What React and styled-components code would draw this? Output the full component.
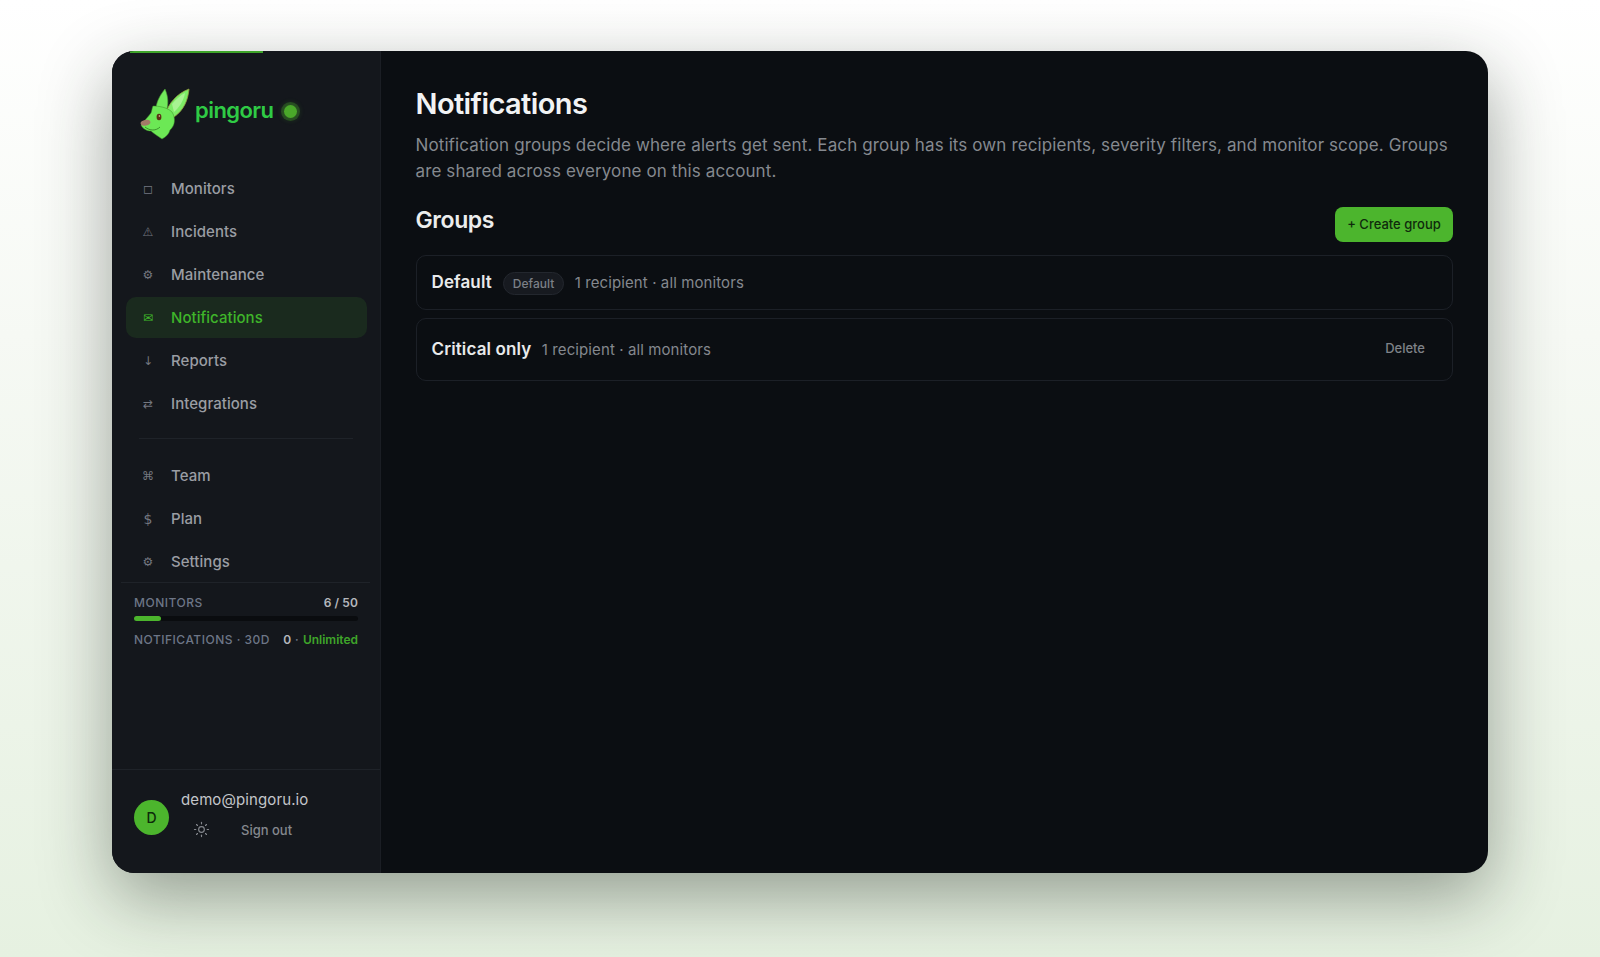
import React from 'react'
import styled, { createGlobalStyle } from 'styled-components'
import { Sun } from 'lucide-react'

const GlobalStyle = createGlobalStyle`
  html, body {
    margin: 0;
    padding: 0;
    height: 100%;
  }
  body {
    font-family: Inter, "Liberation Sans", sans-serif;
    overflow: hidden;
  }
`

const Stage = styled.div`
  box-sizing: border-box;
  width: 1600px;
  height: 957px;
  padding: 51px 112px 84px;
  background: linear-gradient(180deg, #ffffff 0%, #f6f9f4 35%, #e6f1e1 100%);
`

const Window = styled.div`
  position: relative;
  display: flex;
  height: 100%;
  border-radius: 22px;
  overflow: hidden;
  background: #0b0e12;
  box-shadow: 0 24px 70px rgba(30, 40, 30, 0.42);
`

const LoadBar = styled.div`
  position: absolute;
  top: 0;
  left: 18px;
  width: 133px;
  height: 2px;
  background: #3fa52a;
`

const Sidebar = styled.aside`
  box-sizing: border-box;
  width: 269px;
  flex: none;
  display: flex;
  flex-direction: column;
  background: #14171c;
  border-right: 1px solid #1b1e24;
`

const Brand = styled.div`
  display: flex;
  align-items: center;
  padding: 29px 0 28px 18px;
`

const Wordmark = styled.span`
  margin-left: -1px;
  font-size: 22px;
  font-weight: 600;
  letter-spacing: -0.55px;
  color: #2fcb45;
`

const StatusDot = styled.span`
  width: 13px;
  height: 13px;
  margin: 2px 0 0 11px;
  border-radius: 50%;
  background: #4aa82a;
  box-shadow: 0 0 0 3px rgba(74, 168, 42, 0.3), 0 0 5px 3px rgba(74, 168, 42, 0.18);
`

const Nav = styled.nav`
  display: flex;
  flex-direction: column;
  gap: 2px;
  padding: 0 13px 0 14px;
`

const NavItem = styled.a`
  display: flex;
  align-items: center;
  height: 41px;
  padding-left: 12px;
  border-radius: 10px;
  font-size: 15px;
  font-weight: 500;
  letter-spacing: 0.05px;
  color: ${p => (p.$active ? '#3fb52a' : '#9a9da3')};
  background: ${p => (p.$active ? '#1a2a1e' : 'transparent')};
`

const NavIcon = styled.span`
  width: 20px;
  margin-right: 13px;
  text-align: center;
  font-family: "DejaVu Sans", sans-serif;
  font-size: ${p => p.$size || 12}px;
  color: ${p => (p.$active ? '#3fb52a' : '#747880')};
`

const NavDivider = styled.div`
  height: 1px;
  margin: 14px 27px 16px;
  background: #1f2329;
`

const UsageRule = styled.div`
  height: 1px;
  margin: 0 10px 10px 9px;
  background: #1f2329;
`

const UsageRow = styled.div`
  display: flex;
  justify-content: space-between;
  align-items: center;
  height: 18px;
  padding: 0 22px;
  font-size: 12px;
  font-weight: 500;
  letter-spacing: 0.5px;
  color: #6d7687;
`

const UsageValue = styled.span`
  font-weight: 600;
  letter-spacing: 0.1px;
  color: #b5b8bd;
`

const UsageGood = styled.span`
  font-weight: 600;
  letter-spacing: 0;
  color: #3fa52a;
`

const Track = styled.div`
  height: 5px;
  margin: 5px 22px 9px;
  border-radius: 3px;
  background: #0a0c0f;
`

const Fill = styled.div`
  height: 100%;
  border-radius: 3px;
  background: #4cb52d;
`

const Footer = styled.div`
  display: flex;
  align-items: center;
  gap: 12px;
  margin-top: auto;
  height: 104px;
  padding: 0 22px 8px;
  border-top: 1px solid #1f2329;
  box-sizing: border-box;
`

const Avatar = styled.div`
  width: 35px;
  height: 35px;
  flex: none;
  display: flex;
  align-items: center;
  justify-content: center;
  border-radius: 50%;
  background: #4cb52d;
  color: #0d2a0a;
  font-size: 14px;
  font-weight: 500;
`

const Account = styled.div`
  display: flex;
  flex-direction: column;
  gap: 12px;
  margin-top: -7px;
`

const Email = styled.div`
  font-size: 15px;
  letter-spacing: 0.1px;
  color: #c4c6ca;
`

const AccountActions = styled.div`
  display: flex;
  align-items: center;
  gap: 31px;
  padding-left: 12px;
  font-size: 13px;
  font-weight: 500;
  color: #85888e;
`

const Main = styled.main`
  flex: 1;
  min-width: 0;
  padding: 33px 35px 0 34.5px;
`

const Title = styled.h1`
  margin: 0 0 8px;
  font-size: 29px;
  line-height: 40px;
  font-weight: 600;
  letter-spacing: -0.6px;
  color: #f2f3f4;
`

const Description = styled.p`
  margin: 0;
  font-size: 17px;
  line-height: 26px;
  letter-spacing: 0.11px;
  color: #85898f;
`

const SectionHead = styled.div`
  display: flex;
  align-items: center;
  justify-content: space-between;
  margin-top: 23px;
`

const SectionTitle = styled.h2`
  margin: -10px 0 0;
  font-size: 23px;
  font-weight: 600;
  letter-spacing: -0.4px;
  color: #eceded;
`

const CreateButton = styled.button`
  height: 35px;
  width: 118px;
  padding: 0 0 2px;
  border: 0;
  border-radius: 8px;
  background: #4cb52d;
  color: #0f2a0c;
  font-family: inherit;
  font-size: 13px;
  font-weight: 500;
`

const GroupList = styled.div`
  display: flex;
  flex-direction: column;
  gap: 8px;
  margin-top: 12.5px;
`

const GroupRow = styled.div`
  box-sizing: border-box;
  display: flex;
  align-items: center;
  height: ${p => p.$height}px;
  padding: 0 27px 0 15px;
  border: 1px solid #1c2027;
  border-radius: 10px;
`

const GroupName = styled.span`
  font-size: 17px;
  font-weight: 600;
  letter-spacing: 0.12px;
  color: #e9eaeb;
`

const Badge = styled.span`
  box-sizing: border-box;
  display: flex;
  align-items: center;
  height: 23px;
  margin: 2px 0 0 11px;
  padding: 0 9px;
  border: 1px solid #23272e;
  border-radius: 12px;
  background: #171a20;
  font-size: 12px;
  font-weight: 500;
  color: #7c8087;
`

const GroupMeta = styled.span`
  margin: 1px 0 0 10.5px;
  font-size: 15px;
  letter-spacing: 0.1px;
  color: #84888e;
`

const DeleteButton = styled.button`
  margin: -2px 0 0 auto;
  padding: 0;
  border: 0;
  background: none;
  font-family: inherit;
  font-size: 13px;
  font-weight: 500;
  color: #7f8288;
`

const Logo = () => (
  <svg width="66" height="60" viewBox="0 0 66 60" style={{ flex: 'none' }} aria-hidden="true">
    <path d="M26 28 C27 20 31 14 35 9 C38 16 39 24 36 32 Z" fill="#72ea5c" stroke="#4c9a34" strokeWidth=".6" />
    <path d="M36 32 C39 24 46 14 59 9 C58 20 54 30 44 37 Z" fill="#7dec66" stroke="#93a03e" strokeWidth=".8" />
    <path d="M42 24 C46 19 51 15 55 13 C54 20 49 28 44 32 Z" fill="#a8f392" />
    <path d="M23 26 C28 26 37 27 42 32 C46 38 45 46 40 50 C39 54 36 57 32 59 C28 56 24 54 21 51 C17 51 13 49 11 45 C14 41 18 37 21 33 C22 30 22 28 23 26 Z" fill="#6ce855" stroke="#3f8f2c" strokeWidth=".5" />
    <path d="M15 47 C20 51 26 51 30 47" fill="none" stroke="#2f7a22" strokeWidth=".8" />
    <ellipse cx="29" cy="37" rx="2.4" ry="3.2" fill="#5b2f14" />
    <circle cx="29.4" cy="36" r="0.8" fill="#e8d0a0" />
    <ellipse cx="15.5" cy="42.7" rx="5" ry="2.8" fill="#a37a68" transform="rotate(-12 15.5 42.7)" />
  </svg>
)

const primaryNav = [
  ['◻', 'Monitors'],
  ['⚠', 'Incidents'],
  ['⚙', 'Maintenance'],
  ['✉', 'Notifications', true],
  ['↓', 'Reports'],
  ['⇄', 'Integrations'],
]

const secondaryNav = [
  ['⌘', 'Team'],
  ['$', 'Plan', false, 14],
  ['⚙', 'Settings'],
]

const renderNav = items =>
  items.map(([icon, label, active, size]) => (
    <NavItem key={label} $active={active}>
      <NavIcon $active={active} $size={size}>{icon}</NavIcon>
      {label}
    </NavItem>
  ))

export default function App() {
  return (
    <>
      <GlobalStyle />
      <Stage>
        <Window>
          <LoadBar />
          <Sidebar>
            <Brand>
              <Logo />
              <Wordmark>pingoru</Wordmark>
              <StatusDot />
            </Brand>
            <Nav>{renderNav(primaryNav)}</Nav>
            <NavDivider />
            <Nav>{renderNav(secondaryNav)}</Nav>
            <UsageRule />
            <UsageRow>
              <span>MONITORS</span>
              <UsageValue>6 / 50</UsageValue>
            </UsageRow>
            <Track>
              <Fill style={{ width: `${(6 / 50) * 100}%` }} />
            </Track>
            <UsageRow>
              <span>NOTIFICATIONS · 30D</span>
              <span>
                <UsageValue>0</UsageValue> · <UsageGood>Unlimited</UsageGood>
              </span>
            </UsageRow>
            <Footer>
              <Avatar>D</Avatar>
              <Account>
                <Email>demo@pingoru.io</Email>
                <AccountActions>
                  <Sun size={17} strokeWidth={1.6} />
                  <span>Sign out</span>
                </AccountActions>
              </Account>
            </Footer>
          </Sidebar>
          <Main>
            <Title>Notifications</Title>
            <Description>
              Notification groups decide where alerts get sent. Each group has its own recipients, severity filters, and monitor scope. Groups are shared across everyone on this account.
            </Description>
            <SectionHead>
              <SectionTitle>Groups</SectionTitle>
              <CreateButton>+ Create group</CreateButton>
            </SectionHead>
            <GroupList>
              <GroupRow $height={55}>
                <GroupName>Default</GroupName>
                <Badge>Default</Badge>
                <GroupMeta>1 recipient · all monitors</GroupMeta>
              </GroupRow>
              <GroupRow $height={63}>
                <GroupName>Critical only</GroupName>
                <GroupMeta>1 recipient · all monitors</GroupMeta>
                <DeleteButton>Delete</DeleteButton>
              </GroupRow>
            </GroupList>
          </Main>
        </Window>
      </Stage>
    </>
  )
}
